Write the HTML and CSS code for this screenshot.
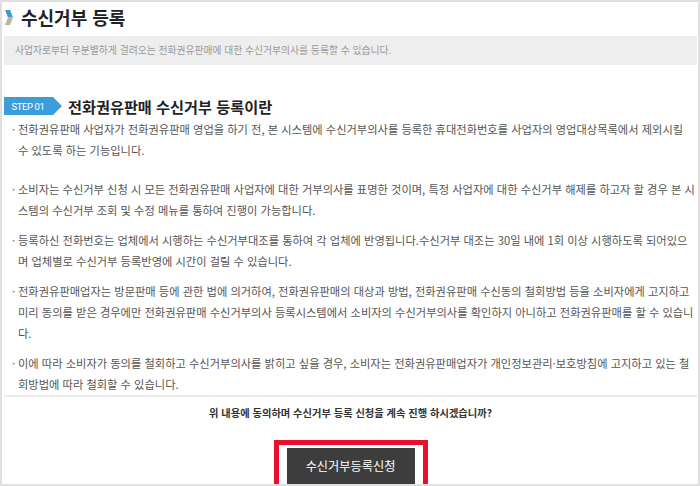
FILE: index.html
```html
<!DOCTYPE html>
<html lang="ko">
<head>
<meta charset="utf-8">
<title>수신거부 등록</title>
<link rel="stylesheet" href="styles.css">
</head>
<body>
<div class="frame">
  <div class="header">
    <svg class="title-icon" width="8" height="15" viewBox="0 0 8 15" aria-hidden="true">
      <polygon points="0,0 5,0 8,7.5 3,7.5" fill="#3a9ad9"/>
      <polygon points="3,7.5 8,7.5 5,15 0,15" fill="#bfb39d"/>
    </svg>
    <h1 class="title">수신거부 등록</h1>
  </div>
  <div class="desc">사업자로부터 무분별하게 걸려오는 전화권유판매에 대한 수신거부의사를 등록할 수 있습니다.</div>

  <div class="step">
    <span class="step-badge">STEP 01</span>
    <h2 class="step-title">전화권유판매 수신거부 등록이란</h2>
  </div>

  <ul class="info-list">
    <li>전화권유판매 사업자가 전화권유판매 영업을 하기 전, 본 시스템에 수신거부의사를 등록한 휴대전화번호를 사업자의 영업대상목록에서 제외시킬 수 있도록 하는 기능입니다.</li>
    <li>소비자는 수신거부 신청 시 모든 전화권유판매 사업자에 대한 거부의사를 표명한 것이며, 특정 사업자에 대한 수신거부 해제를 하고자 할 경우 본 시스템의 수신거부 조회 및 수정 메뉴를 통하여 진행이 가능합니다.</li>
    <li>등록하신 전화번호는 업체에서 시행하는 수신거부대조를 통하여 각 업체에 반영됩니다.수신거부 대조는 30일 내에 1회 이상 시행하도록 되어있으며 업체별로 수신거부 등록반영에 시간이 걸릴 수 있습니다.</li>
    <li>전화권유판매업자는 방문판매 등에 관한 법에 의거하여, 전화권유판매의 대상과 방법, 전화권유판매 수신동의 철회방법 등을 소비자에게 고지하고 미리 동의를 받은 경우에만 전화권유판매 수신거부의사 등록시스템에서 소비자의 수신거부의사를 확인하지 아니하고 전화권유판매를 할 수 있습니다.</li>
    <li>이에 따라 소비자가 동의를 철회하고 수신거부의사를 밝히고 싶을 경우, 소비자는 전화권유판매업자가 개인정보관리·보호방침에 고지하고 있는 철회방법에 따라 철회할 수 있습니다.</li>
  </ul>

  <div class="confirm">
    <p class="confirm-text">위 내용에 동의하며 수신거부 등록 신청을 계속 진행 하시겠습니까?</p>
    <div class="btn-highlight">
      <button class="btn-submit" type="button">수신거부등록신청</button>
    </div>
  </div>
</div>
</body>
</html>
```
FILE: styles.css
```css
* { box-sizing: border-box; }

html, body {
  margin: 0;
  padding: 0;
  background: #fff;
}

body {
  font-family: "Noto Sans CJK KR", "Noto Sans", sans-serif;
  color: #555;
}

.frame {
  width: 700px;
  height: 486px;
  border: 2px solid #e0e0e0;
  padding: 0 1px 0 2px;
  overflow: hidden;
  background: #fff;
}

.header {
  display: flex;
  align-items: center;
  height: 30px;
  margin-bottom: 4px;
}

.title-icon {
  display: block;
  margin-left: 1px;
  margin-right: 8px;
}

.title {
  margin: 0;
  font-size: 18px;
  font-weight: 700;
  color: #222;
  line-height: 30px;
}

.desc {
  height: 29px;
  line-height: 29px;
  padding-left: 11px;
  background: #eeeeee;
  font-size: 9.8px;
  color: #999;
}

.step {
  display: flex;
  align-items: center;
  height: 18px;
  margin-top: 32px;
}

.step-badge {
  display: flex;
  align-items: center;
  justify-content: center;
  flex: none;
  width: 58px;
  height: 18px;
  padding-right: 10px;
  background: #3b9edb;
  clip-path: polygon(0 0, 49px 0, 58px 50%, 49px 100%, 0 100%);
  color: #fff;
  font-family: "Roboto", "Liberation Sans", sans-serif;
  font-size: 9.5px;
  letter-spacing: -0.4px;
}

.step-title {
  margin: 0 0 0 6px;
  font-size: 15.2px;
  font-weight: 700;
  color: #222;
  line-height: 18px;
}

.info-list {
  list-style: none;
  margin: 4px 0 0;
  padding: 0 1px 0 14px;
  font-size: 11.25px;
  line-height: 21px;
  color: #555;
}

.info-list li {
  margin-bottom: 9px;
}

.info-list li:first-child {
  margin-bottom: 18px;
}

.info-list li:last-child {
  margin-bottom: 0;
}

.info-list li::before {
  content: "·";
  display: inline-block;
  width: 8px;
  margin-left: -8px;
  color: #666;
  transform: translateX(2px);
}

.confirm {
  border-top: 2px solid #ebebeb;
  text-align: center;
}

.confirm-text {
  margin: 6px 0 0;
  font-size: 10.25px;
  font-weight: 700;
  color: #333;
  line-height: 20px;
}

.btn-highlight {
  display: inline-block;
  margin-top: 17px;
  border: 5px solid #e8102c;
  padding: 3px 8px 0;
  width: 154px;
  height: 60px;
}

.btn-submit {
  display: block;
  width: 128px;
  height: 40px;
  border: 0;
  padding: 0 0 4px;
  background: #3d3d3d;
  color: #fff;
  font-family: "Noto Sans CJK KR", sans-serif;
  font-size: 12.2px;
}
```
